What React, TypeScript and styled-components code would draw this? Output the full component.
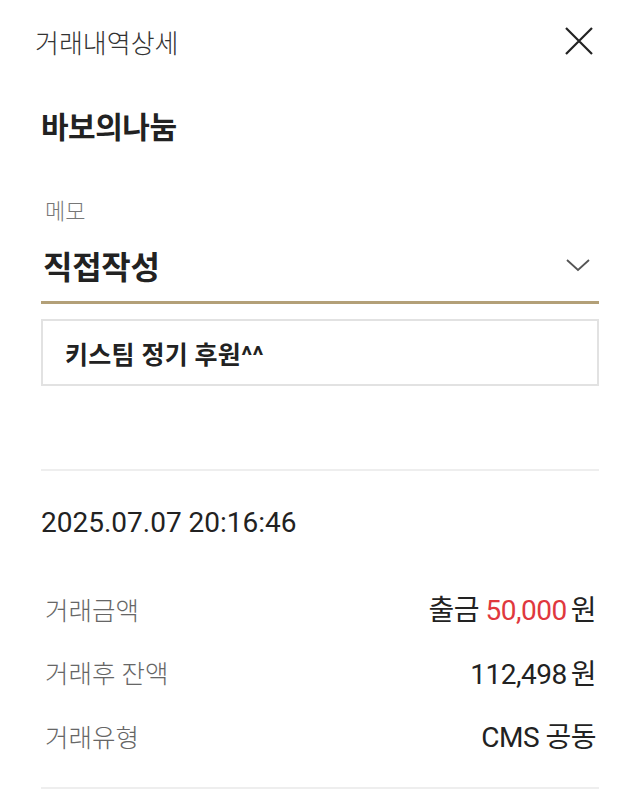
import React from "react";
import styled, { createGlobalStyle } from "styled-components";

const Global = createGlobalStyle`
  html, body { margin: 0; padding: 0; background: #fff; }
  body { font-family: Roboto, "Noto Sans CJK KR", sans-serif; color: #222; }
`;

const Page = styled.div`
  width: 640px;
  box-sizing: border-box;
  padding: 0 41px;
`;

const Header = styled.header`
  height: 82px;
  display: flex;
  align-items: center;
  justify-content: space-between;
  margin-left: -6px;
`;

const HeaderTitle = styled.h1`
  margin: 0;
  font-size: 26px;
  font-weight: 300;
  color: #333;
`;

const CloseBtn = styled.button`
  border: 0;
  background: none;
  padding: 0;
  width: 28px;
  height: 28px;
  display: flex;
  align-items: center;
  justify-content: center;
  margin-right: 6px;
`;

const Name = styled.h2`
  margin: 0;
  padding-top: 28px;
  font-size: 30px;
  font-weight: 700;
  color: #222;
  line-height: 36px;
  letter-spacing: -0.5px;
`;

const MemoLabel = styled.div`
  margin-top: 51px;
  padding-left: 4px;
  font-size: 22px;
  font-weight: 300;
  color: #777;
  line-height: 30px;
`;

const Select = styled.div`
  margin-top: 18px;
  height: 40px;
  display: flex;
  align-items: center;
  justify-content: space-between;
  border-bottom: 3px solid #b3a078;
  padding-bottom: 16px;
`;

const SelectText = styled.span`
  font-size: 32px;
  font-weight: 700;
  color: #222;
  padding-left: 2px;
  letter-spacing: -0.3px;
`;

const MemoBox = styled.div`
  margin-top: 15px;
  height: 67px;
  box-sizing: border-box;
  border: 2px solid #e2e2e2;
  display: flex;
  align-items: center;
  padding-left: 22px;
  font-size: 25px;
  font-weight: 700;
  color: #222;
  letter-spacing: 0.3px;
`;

const Divider = styled.hr<{ $top: number }>`
  margin: ${(p) => p.$top}px 0 0;
  border: 0;
  border-top: 2px solid #eeeeee;
`;

const DateText = styled.div`
  margin-top: 37px;
  font-size: 28px;
  font-weight: 400;
  color: #222;
  line-height: 30px;
`;

const Rows = styled.div`
  margin-top: 50px;
  display: flex;
  flex-direction: column;
  gap: 23.5px;
`;

const Row = styled.div`
  display: flex;
  justify-content: space-between;
  align-items: center;
  height: 40px;
  padding: 0 3px 0 4px;
`;

const Label = styled.span`
  font-size: 25.5px;
  font-weight: 300;
  color: #666;
`;

const Value = styled.span`
  font-size: 28px;
  font-weight: 400;
  color: #222;
  letter-spacing: -0.5px;
`;

const Red = styled.span`
  color: #e0383e;
`;

const Won = styled.span`
  margin-left: 4px;
`;

export default function App() {
  return (
    <>
      <Global />
      <Page>
        <Header>
          <HeaderTitle>거래내역상세</HeaderTitle>
          <CloseBtn aria-label="닫기">
            <svg width="28" height="28" viewBox="0 0 28 28">
              <path d="M1 1 L27 27 M27 1 L1 27" stroke="#222" strokeWidth="2.2" fill="none" />
            </svg>
          </CloseBtn>
        </Header>
        <Name>바보의나눔</Name>
        <MemoLabel>메모</MemoLabel>
        <Select>
          <SelectText>직접작성</SelectText>
          <svg width="26" height="16" viewBox="0 0 26 16" style={{ marginRight: 8 }}>
            <path d="M2 3 L13 13 L24 3" stroke="#555" strokeWidth="1.8" fill="none" />
          </svg>
        </Select>
        <MemoBox>키스팀 정기 후원^^</MemoBox>
        <Divider $top={83} />
        <DateText>2025.07.07 20:16:46</DateText>
        <Rows>
          <Row>
            <Label>거래금액</Label>
            <Value>
              출금 <Red>50,000</Red>
              <Won>원</Won>
            </Value>
          </Row>
          <Row>
            <Label>거래후 잔액</Label>
            <Value>
              112,498<Won>원</Won>
            </Value>
          </Row>
          <Row>
            <Label>거래유형</Label>
            <Value>CMS 공동</Value>
          </Row>
        </Rows>
        <Divider $top={32} />
      </Page>
    </>
  );
}
